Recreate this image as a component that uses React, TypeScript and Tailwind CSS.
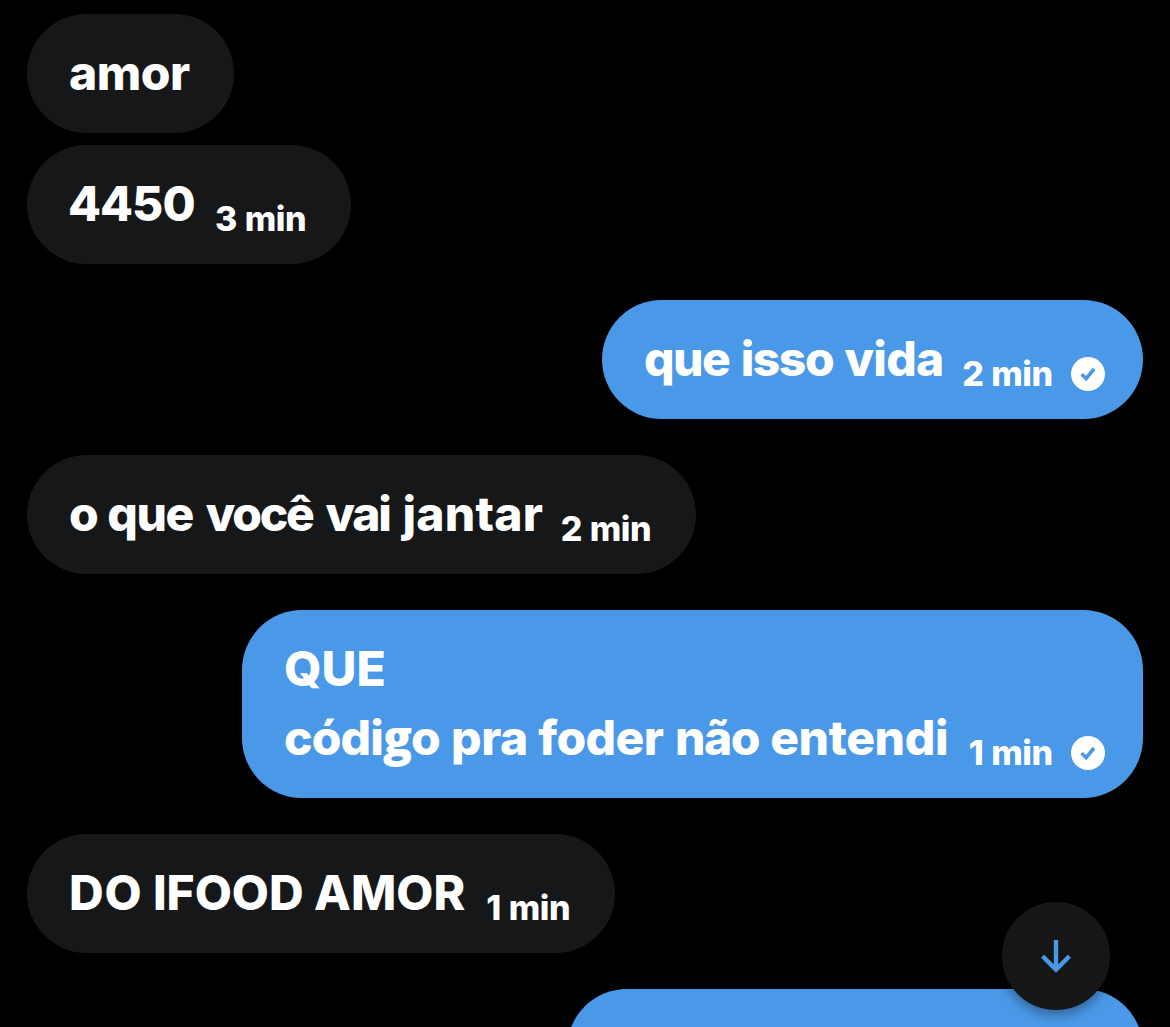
import type { ReactNode } from 'react';
import clsx from 'clsx';

function SentIcon() {
  return (
    <svg viewBox="0 0 34 34" className="mb-[1.67px] ml-[18.5px] size-[34px] shrink-0" aria-hidden="true">
      <circle cx="17" cy="17" r="17" fill="#fff" />
      <path d="M10.6 17.2 15.2 21.6 23 12" fill="none" stroke="#4a99e9" strokeWidth="3.6" />
    </svg>
  );
}

type BubbleProps = {
  children: ReactNode;
  time?: string;
  sent?: boolean;
  className: string;
};

function Bubble({ children, time, sent, className }: BubbleProps) {
  return (
    <div
      className={clsx(
        'flex shrink-0 items-end justify-between rounded-[60px] pt-[24px] pb-[25.67px] pl-[42px] whitespace-nowrap',
        sent ? 'self-end bg-[#4a99e9] pr-[38px]' : 'self-start bg-[#161719] pr-[45px]',
        className,
      )}
    >
      <p className="text-[48px] leading-[69px] font-extrabold">{children}</p>
      {time && (
        <div className="flex items-end [word-spacing:1px]">
          <span className="text-[34px] leading-[38px] font-extrabold tracking-[-0.5px]">{time}</span>
          {sent && <SentIcon />}
        </div>
      )}
    </div>
  );
}

export default function App() {
  return (
    <main className="relative flex h-[1027px] w-[1170px] flex-col overflow-hidden bg-black px-[27px] pt-[14px] font-['Inter',sans-serif] text-white">
      <Bubble className="w-[207px] tracking-[-0.5px]">amor</Bubble>
      <Bubble className="mt-[12.33px] w-[324px]" time="3 min">
        <span className="ml-[-1px] tracking-[-1px]">4450</span>
      </Bubble>
      <Bubble className="mt-[36.33px] w-[541px] [word-spacing:0.8px]" time="2 min" sent>
        <span className="tracking-[-1.5px]">que</span> <span className="tracking-[-1.5px]">isso</span>{' '}
        <span className="tracking-[-0.7px]">vida</span>
      </Bubble>
      <Bubble className="mt-[36.33px] w-[669px] [word-spacing:2.4px]" time="2 min">
        <span className="tracking-[-2.2px]">o </span>
        <span className="tracking-[-1.4px]">que</span> <span className="tracking-[-2.3px]">você</span>{' '}
        <span className="tracking-[-2.2px]">vai</span> <span className="tracking-[0.2px]">jantar</span>
      </Bubble>
      <Bubble className="mt-[36.33px] w-[901px]" time="1 min" sent>
        QUE
        <br />
        <span className="mr-[0.5px] tracking-[-0.9px]">
          códi<span className="font-['Open_Sans'] leading-none">g</span>o
        </span>{' '}
        <span className="tracking-[-0.4px]">pra</span>{' '}
        <span className="mr-[1px] tracking-[-0.6px]">foder</span>{' '}
        <span className="mr-[0.5px] tracking-[-1.4px]">não</span> <span className="tracking-[-0.4px]">entendi</span>
      </Bubble>
      <Bubble className="mt-[36.33px] w-[588px]" time="1 min">
        <span className="tracking-[0.8px]">DO</span> <span>IFOOD</span> AMOR
      </Bubble>
      <div className="mt-[36.33px] h-[120px] w-[576px] shrink-0 self-end rounded-[60px] bg-[#4a99e9]" />

      <button
        type="button"
        aria-label="Scroll to latest"
        className="absolute right-[60px] bottom-[17px] flex size-[108px] items-center justify-center rounded-full bg-[#161616] shadow-[0_5px_12px_rgba(0,0,0,0.35)]"
      >
        <svg viewBox="0 0 32 34" className="h-[34px] w-8" fill="none" stroke="#4a99e9" strokeWidth="4.4">
          <path d="M16 1v29M2.6 17.3 16 30.6 29.4 17.3" />
        </svg>
      </button>
    </main>
  );
}
